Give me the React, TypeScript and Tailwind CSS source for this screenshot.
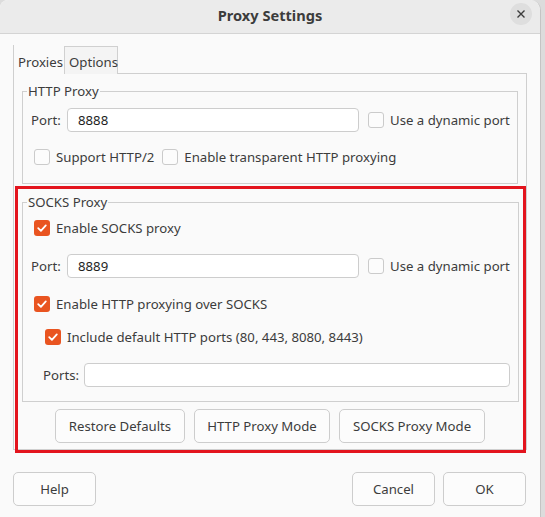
import React from 'react';

function CheckBox({ checked }: { checked?: boolean }) {
  if (checked) {
    return (
      <span className="flex h-[16px] w-[16px] shrink-0 items-center justify-center rounded-[3px] bg-[#e95420]">
        <svg width="12" height="12" viewBox="0 0 12 12" fill="none">
          <path d="M2.2 6.2 L4.9 8.8 L9.8 3.4" stroke="white" strokeWidth="1.8" strokeLinecap="round" strokeLinejoin="round" />
        </svg>
      </span>
    );
  }
  return <span className="h-[16px] w-[16px] shrink-0 rounded-[3px] border border-[#cbcbcb] bg-[#fcfcfc]" />;
}

function Check({ label, checked }: { label: string; checked?: boolean }) {
  return (
    <label className="flex h-[20px] items-center gap-[6px] whitespace-nowrap">
      <CheckBox checked={checked} />
      <span>{label}</span>
    </label>
  );
}

function TextInput({ value, className }: { value?: string; className?: string }) {
  return (
    <div className={`flex h-[24px] items-center rounded-[4px] border border-[#cdcdcd] bg-white px-[10px] text-[#1e1e1e] ${className ?? ''}`}>
      {value}
    </div>
  );
}

function Btn({ label, className }: { label: string; className?: string }) {
  return (
    <button className={`flex h-[34px] items-center justify-center whitespace-nowrap rounded-[5px] border border-[#cdcdcd] bg-[#fcfcfc] text-[#3c3c3c] ${className ?? ''}`}>
      {label}
    </button>
  );
}

function PortRow({ value }: { value: string }) {
  return (
    <div className="flex h-[24px] items-center">
      <span className="w-[36px]">Port:</span>
      <TextInput value={value} className="w-[292px]" />
      <div className="ml-[9px]">
        <Check label="Use a dynamic port" />
      </div>
    </div>
  );
}

export default function App() {
  return (
    <div className="flex h-[517px] w-[545px] bg-[#dcdcdc] font-['Noto_Sans',sans-serif] text-[13.2px] leading-[20px] text-[#3c3c3c]">
      <div className="relative flex w-[541px] flex-col overflow-hidden rounded-tr-[10px] rounded-tl-[8px] border-r border-[#c4c4c4] bg-[#fafafa]">
        {/* title bar */}
        <div className="relative flex h-[34px] shrink-0 items-center justify-center border-b border-[#d4d4d4] bg-[#ebebeb]">
          <span className="mt-[-4px] text-[14.6px] font-bold text-[#3c3c3c]">Proxy Settings</span>
          <button className="absolute right-[8px] top-[3px] flex h-[22px] w-[22px] items-center justify-center rounded-full bg-[#dedede]">
            <svg width="10" height="10" viewBox="0 0 10 10">
              <path d="M1.5 1.5 L8.5 8.5 M8.5 1.5 L1.5 8.5" stroke="#3c3c3c" strokeWidth="1.4" />
            </svg>
          </button>
        </div>

        {/* tab widget */}
        <div className="ml-[13px] mt-[11px] flex w-[514px] flex-col">
          <div className="flex h-[29px] items-end">
            <div className="flex h-[29px] w-[51px] items-center whitespace-nowrap border-l border-[#cfcfcf] pl-[4px] pt-[4px]">Proxies</div>
            <div className="flex h-[28px] w-[54px] items-center whitespace-nowrap border border-b-0 border-[#d0d0d0] bg-[#f4f4f4] pl-[4px] pt-[3px]">Options</div>
            <div className="h-[1px] flex-1 bg-[#cfcfcf]" />
          </div>
          <div className="flex h-[376px] flex-col border border-t-0 border-[#cfcfcf] px-[8px]">
            <fieldset className="mt-[7px] flex flex-col border border-[#cfcfcf] pb-[16px] pl-[8px]">
              <legend className="ml-[-4px] px-[1px] leading-[20px]">HTTP Proxy</legend>
              <div className="mt-[7px]">
                <PortRow value="8888" />
              </div>
              <div className="ml-[3px] mt-[15px] flex items-center gap-[8px]">
                <Check label="Support HTTP/2" />
                <Check label="Enable transparent HTTP proxying" />
              </div>
            </fieldset>

            <fieldset className="mt-[8px] flex flex-col border border-[#cfcfcf] pb-[14px] pl-[8px] pr-[8px]">
              <legend className="ml-[-4px] px-[1px] leading-[20px]">SOCKS Proxy</legend>
              <div className="ml-[3px] mt-[6px]">
                <Check label="Enable SOCKS proxy" checked />
              </div>
              <div className="mt-[16px]">
                <PortRow value="8889" />
              </div>
              <div className="ml-[3px] mt-[16px]">
                <Check label="Enable HTTP proxying over SOCKS" checked />
              </div>
              <div className="ml-[14px] mt-[13px]">
                <Check label="Include default HTTP ports (80, 443, 8080, 8443)" checked />
              </div>
              <div className="ml-[12px] mt-[16px] flex h-[24px] items-center">
                <span className="w-[41px]">Ports:</span>
                <TextInput className="flex-1" />
              </div>
            </fieldset>

            <div className="mt-[7px] flex justify-center gap-[9px]">
              <Btn label="Restore Defaults" className="w-[130px]" />
              <Btn label="HTTP Proxy Mode" className="w-[136px]" />
              <Btn label="SOCKS Proxy Mode" className="w-[146px]" />
            </div>
          </div>
        </div>

        {/* dialog buttons */}
        <div className="mt-[22px] flex px-[13px] pr-[14px]">
          <Btn label="Help" className="w-[83px]" />
          <div className="flex-1" />
          <Btn label="Cancel" className="w-[83px]" />
          <Btn label="OK" className="ml-[8px] w-[83px]" />
        </div>

        {/* red highlight annotation */}
        <div className="absolute left-[15px] top-[186px] h-[267px] w-[511px] border-[3px] border-[#e3141d]" />
      </div>
    </div>
  );
}
